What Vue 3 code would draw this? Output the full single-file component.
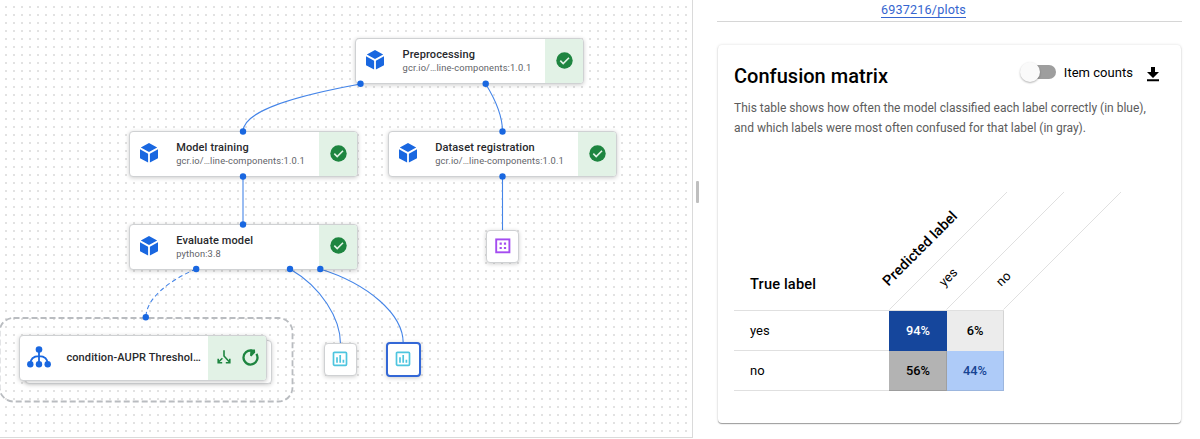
<script setup>
const nodes = [
  { x: 355.4, y: 38, title: 'Preprocessing', sub: 'gcr.io/…line-components:1.0.1' },
  { x: 129, y: 131, title: 'Model training', sub: 'gcr.io/…line-components:1.0.1' },
  { x: 388, y: 131, title: 'Dataset registration', sub: 'gcr.io/…line-components:1.0.1' },
  { x: 129, y: 223.5, title: 'Evaluate model', sub: 'python:3.8' },
]
const edges = [
  'M360.5 84C300 95 243 110 243 131.5',
  'M485.7 84Q502.5 111 502.5 131.5',
  'M243 177V224',
  'M502.5 177V231',
  'M290 269C321 287 340.5 318 340.5 344',
  'M320.3 269C368 284 403.2 314 403.2 343',
]
const ports = [
  [360.5, 83.7], [485.7, 83.7], [502.5, 131.5], [243, 131.5], [243, 176.5], [243, 224.5],
  [502.5, 176.4], [196.2, 269], [290, 269], [320.3, 269], [145.8, 317.2],
]
const rows = [
  { label: 'yes', cells: [['94%', 'deep'], ['6%', 'faint']] },
  { label: 'no', cells: [['56%', 'gray'], ['44%', 'light']] },
]
</script>

<template>
  <div class="page">
    <section class="canvas">
      <svg class="layer" width="692" height="437">
        <rect x="-0.5" y="318" width="293" height="83.5" rx="14" class="group" />
        <path v-for="d in edges" :key="d" :d="d" class="edge" />
        <path d="M196 269C168 281 146 299 146 317" class="edge dashed" />
      </svg>

      <div v-for="n in nodes" :key="n.title" class="node" :style="{ left: n.x + 'px', top: n.y + 'px' }">
        <svg class="cube" width="18" height="20" viewBox="0 0 18 20">
          <path d="M9 0 17.2 4.4 9 9 .8 4.4ZM0 6.2 8.1 10.7V19.6L0 15.2ZM18 6.2 9.9 10.7V19.6L18 15.2Z" fill="#1967e0" />
        </svg>
        <div class="label"><b>{{ n.title }}</b><span>{{ n.sub }}</span></div>
        <div class="status">
          <svg width="17" height="17" viewBox="0 0 17 17">
            <circle cx="8.5" cy="8.5" r="8.2" fill="#1e8540" />
            <path d="M4.3 8.6 7.2 11.5 13 5.7" fill="none" stroke="#e2f2e6" stroke-width="1.6" />
          </svg>
        </div>
      </div>

      <div class="stack"></div>
      <div class="node condition">
        <svg class="tree" width="24" height="22" viewBox="0 0 24 22">
          <g fill="none" stroke="#1967e0" stroke-width="1.8"><path d="M12 4V18M3.4 18C3.4 12.5 7 10.2 12 10.2S20.6 12.5 20.6 18" /></g>
          <g fill="#1967e0"><circle cx="12" cy="3.5" r="3.3" /><circle cx="3.3" cy="18.3" r="3.2" /><circle cx="12" cy="18.3" r="3.2" /><circle cx="20.7" cy="18.3" r="3.2" /></g>
        </svg>
        <div class="label"><b>condition-AUPR Threshol…</b></div>
        <div class="status">
          <svg width="14" height="14" viewBox="0 0 14 14" fill="none" stroke="#1e8540" stroke-width="1.6">
            <path d="M7 .3V6L12.5 12M5.4 8.2 1.5 12M1.2 8.8V12.7H5.2M8.8 12.7H12.8V8.8" />
          </svg>
          <svg width="17" height="17" viewBox="0 0 17 17">
            <path d="M10 1.7A7 7 0 1 0 14.4 4.8" fill="none" stroke="#1e8540" stroke-width="2.3" />
            <path d="M8.5 .6H13L13.2 3.4 9.4 7.6 8 6.6Z" fill="#1e8540" />
          </svg>
        </div>
      </div>

      <div class="artifact dataset">
        <svg width="16" height="16" viewBox="0 0 16 16">
          <rect x="1.2" y="1.4" width="13.2" height="12.9" fill="none" stroke="#a44cf0" stroke-width="1.9" />
          <path d="M4.6 4.6h2.2v2.2h-2.2zM8.9 4.6h2.2v2.2h-2.2zM4.6 8.9h2.2v2.2h-2.2zM8.9 8.9h2.2v2.2h-2.2z" fill="#a44cf0" />
        </svg>
      </div>
      <div v-for="k in ['metrics', 'selected']" :key="k" class="artifact" :class="k">
        <svg width="16" height="16" viewBox="0 0 16 16" fill="none" stroke="#4ec5df" stroke-width="1.7">
          <rect x="1.5" y="1.3" width="13" height="13" rx="1" /><path d="M5 6.3V11.8M8.2 4.1V11.8M11.4 8.8V11.8" />
        </svg>
      </div>

      <svg class="layer" width="692" height="437">
        <circle v-for="p in ports" :key="p.join()" :cx="p[0]" :cy="p[1]" r="3.2" fill="#1967e0" />
      </svg>
    </section>

    <div class="resizer"><i></i></div>

    <aside class="panel">
      <div class="source"><a>6937216/plots</a></div>
      <div class="card">
        <header>
          <h2>Confusion matrix</h2>
          <div class="toggle"><i></i></div>
          <span class="toggle-label">Item counts</span>
          <svg width="12" height="15" viewBox="0 0 12 15"><path d="M4 0H8V5H12L6 11 0 5H4ZM0 12.3H12V14.2H0Z" /></svg>
        </header>
        <p>This table shows how often the model classified each label correctly (in blue),<br>and which labels were most often confused for that label (in gray).</p>
        <div class="matrix">
          <div class="head">
            <strong>True label</strong>
            <svg width="114" height="119" viewBox="0 0 114 119">
              <path d="M.5 118.5 118 1M57.5 118.5 175 1M114.5 118.5 232 1" stroke="#e0e0e0" fill="none" />
              <text class="pred" transform="translate(-0.5 95.8) rotate(-45)">Predicted label</text>
              <text class="col" transform="translate(55.3 96.2) rotate(-45)">yes</text>
              <text class="col" transform="translate(112.3 96) rotate(-45)">no</text>
            </svg>
          </div>
          <div v-for="r in rows" :key="r.label" class="row">
            <span class="name">{{ r.label }}</span>
            <span v-for="c in r.cells" :key="c[0]" class="cell" :class="c[1]">{{ c[0] }}</span>
          </div>
        </div>
      </div>
    </aside>
  </div>
</template>

<style>
body { margin: 0; background: #fff; overflow: hidden; }
</style>

<style scoped>
* { box-sizing: border-box; }
.page { display: flex; width: 1200px; height: 439px; font-family: Roboto, sans-serif; color: #000; overflow: hidden; background: #fff; }
.canvas {
  position: relative; width: 693px; height: 438px; flex: none; overflow: hidden;
  border-right: 1px solid #dadada; border-bottom: 1px solid #dadada;
  background: repeating-linear-gradient(90deg, #fff 0 5px, transparent 5px 7px, #fff 7px 8px), repeating-linear-gradient(#fff 0 6px, #e2e2e2 6px 8px);
}
.layer { position: absolute; left: 0; top: 0; }
.group { fill: none; stroke: #b9bcc0; stroke-width: 1.8; stroke-dasharray: 6 3; }
.edge { fill: none; stroke: #4585e8; stroke-width: 1.1; }
.dashed { stroke-dasharray: 4.5 3; }
.node {
  position: absolute; display: flex; align-items: stretch; width: 229px; height: 46px;
  background: #fff; border: 1px solid #cfd1d3; border-radius: 4px; box-shadow: 0 1px 4px rgba(0, 0, 0, .2); overflow: hidden;
}
.cube { margin: 11.4px 0 0 10px; flex: none; }
.label { display: flex; flex-direction: column; padding: 9px 0 0 18.2px; flex: 1; white-space: nowrap; }
.label b { font-size: 11px; line-height: 14px; font-weight: 500; letter-spacing: .12px; color: #28292c; }
.label span { font-size: 9.3px; line-height: 12px; letter-spacing: .14px; color: #5f6368; }
.status { width: 38px; flex: none; background: #e2f2e6; display: flex; align-items: center; justify-content: center; padding: 0 0 1.4px 0; }
.stack { position: absolute; left: 25px; top: 340px; width: 247px; height: 44px; background: #fff; border: 1px solid #cfd1d3; border-radius: 4px; box-shadow: 0 1px 4px rgba(0, 0, 0, .2); }
.condition { left: 19px; top: 335px; width: 248px; }
.condition .label { padding: 15px 0 0 15.4px; }
.condition .status { width: 58px; gap: 11px; padding-left: 1px; }
.tree { margin: 10px 0 0 7px; flex: none; }
.artifact {
  position: absolute; width: 33px; height: 33px; display: flex; align-items: center; justify-content: center;
  background: #fff; border: 1px solid #cfd1d3; border-radius: 4px; box-shadow: 0 1px 4px rgba(0, 0, 0, .2);
}
.dataset { left: 486px; top: 230px; }
.dataset svg { margin: -2px 0 0 0; }
.metrics { left: 324px; top: 343px; }
.metrics svg { margin: -1px 0 0 -1px; }
.selected { left: 386px; top: 342px; width: 35px; height: 35px; border: 2px solid #3367d6; }
.selected svg { margin: -2px 0 0 -1px; }
.resizer { width: 24px; flex: none; padding: 181px 0 0 3px; }
.resizer i { display: block; width: 3px; height: 22px; background: #bfbfbf; border-radius: 1px; }
.panel { width: 465px; flex: none; }
.source { height: 22px; border-bottom: 1px solid #d6d6d6; padding: 1px 0 0 164px; font-size: 12.6px; line-height: 17px; }
.source a { display: inline-block; height: 17px; color: #3565cf; border-bottom: 1px solid #3565cf; letter-spacing: .18px; }
.card {
  margin: 23px 0 0 1px; width: 463px; height: 378px; border-radius: 4px; padding: 17px 17px 0 16px; background: #fff;
  box-shadow: 0 1px 1px rgba(0, 0, 0, .36), 0 0 3px rgba(0, 0, 0, .14);
}
header { display: flex; align-items: center; height: 29px; }
h2 { flex: 1; margin: -2px 0 0; font-size: 20px; line-height: 28px; font-weight: 500; letter-spacing: .02px; }
.toggle { position: relative; width: 36px; height: 20px; margin: -9px 8px 0 0; display: flex; align-items: center; }
.toggle::before { content: ''; position: absolute; inset: 3px 0 3px 1px; border-radius: 7px; background: #9e9e9e; }
.toggle i { position: relative; width: 20px; height: 20px; border-radius: 50%; background: #fafafa; box-shadow: 0 1px 2px rgba(0, 0, 0, .3); }
.toggle-label { font-size: 13px; letter-spacing: .03px; margin: -8px 14px 0 0; }
header svg { margin-top: -5px; margin-right: 5px; }
p { margin: 7px 0 0; font-size: 12px; line-height: 20px; color: #5c5c5c; white-space: nowrap; }
.matrix { margin-top: 53px; width: 270px; }
.head { display: flex; height: 119px; }
.head strong { width: 155px; padding: 83px 0 0 16px; font-size: 14.6px; line-height: 20px; font-weight: 500; letter-spacing: .17px; }
.head svg { overflow: visible; flex: none; }
.pred { font-size: 14.5px; font-weight: 500; letter-spacing: .12px; }
.col { font-size: 13px; }
.row { display: flex; height: 40px; line-height: 40px; font-size: 13px; border-top: 1px solid #e0e0e0; width: 270px; }
.row:last-child { height: 41px; border-bottom: 1px solid #e0e0e0; }
.name { width: 155px; padding-left: 16px; }
.cell { width: 57px; flex: none; text-align: center; font-weight: 500; font-size: 12.8px; border-right: 1px solid rgba(0, 0, 0, .1); height: 40px; }
.cell:nth-child(2) { width: 58px; padding-left: 1px; }
.deep { background: #15469c; color: #fff; border-color: #15469c; }
.faint { background: #ececec; }
.gray { background: #b3b3b3; box-shadow: inset 0 -1px rgba(0, 0, 0, .12); }
.light { background: #aecbf8; color: #174493; box-shadow: inset 0 -1px rgba(0, 0, 0, .1); }
</style>
